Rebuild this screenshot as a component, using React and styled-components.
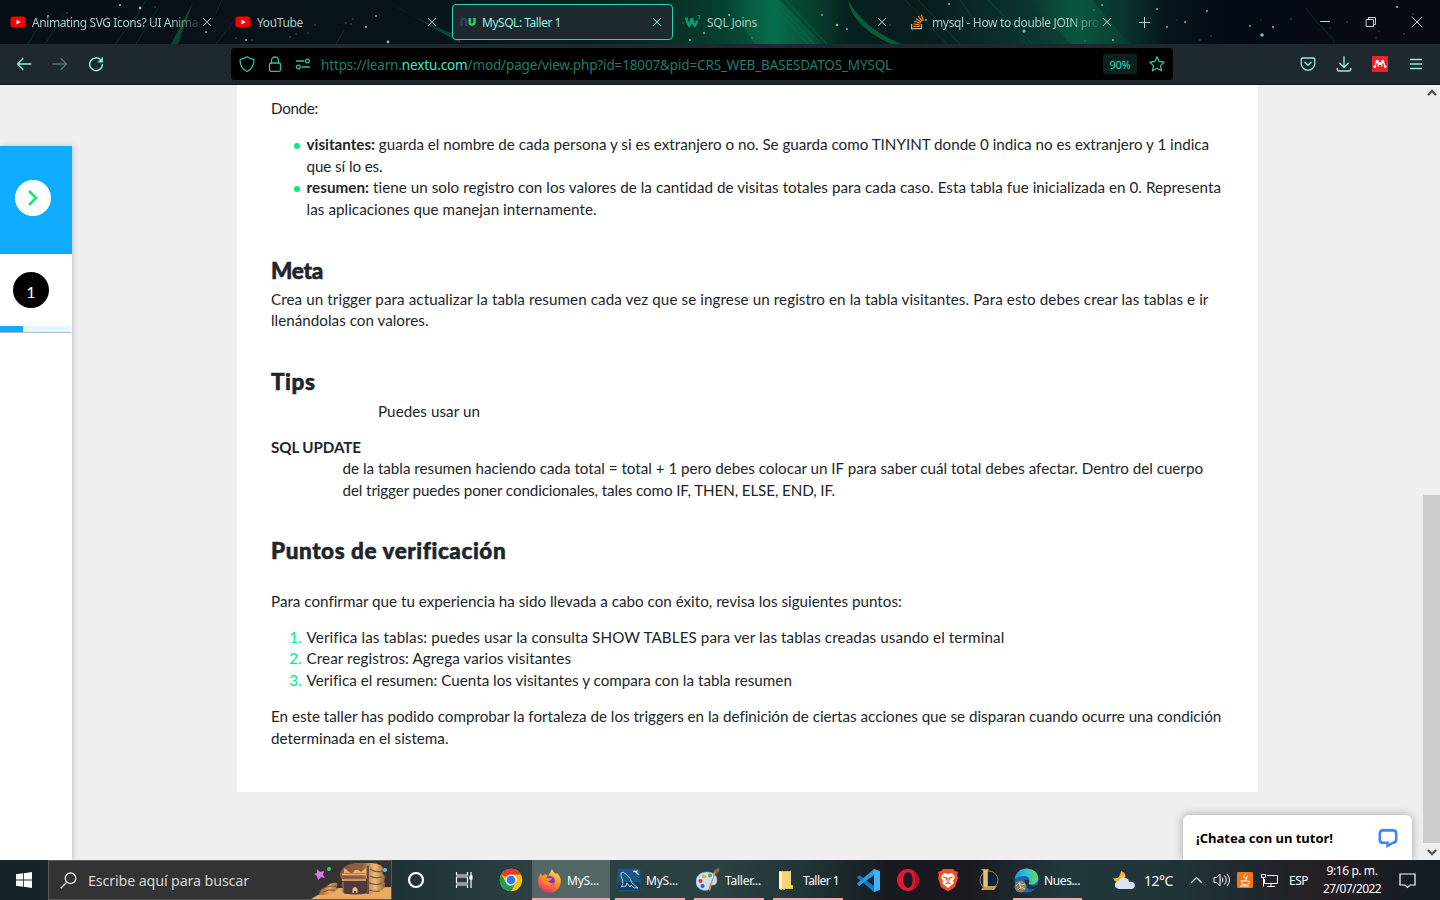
import React, { useLayoutEffect, useRef } from 'react';
import styled, { createGlobalStyle } from 'styled-components';

const Global = createGlobalStyle`
  * { box-sizing: border-box; }
  body { margin: 0; overflow: hidden; background: #efefef; }
  svg { display: block; flex: none; }
`;
const UI = '"Noto Sans", "Open Sans", sans-serif';

const Screen = styled.div`
  width: 1440px; height: 900px; display: flex; flex-direction: column; overflow: hidden;
  font-family: ${UI};
`;

/* A single text line whose tracking is adjusted so that it spans a given width. */
const LineText = styled.span`display: inline-block; white-space: nowrap;`;
function Fit({ w, children }) {
  const ref = useRef(null);
  useLayoutEffect(() => {
    const el = ref.current;
    el.style.letterSpacing = '0px';
    const natural = el.getBoundingClientRect().width;
    const n = el.textContent.length;
    el.style.letterSpacing = (w - natural) / n + 'px';
  }, [w]);
  return <LineText ref={ref}>{children}</LineText>;
}

/* ---------- Tab strip ---------- */
const TabStrip = styled.div`
  position: relative; height: 44px; flex: none; display: flex; align-items: center;
  background: #07131a; padding: 0 0 0 2px;
`;
const Backdrop = styled.svg`position: absolute; inset: 0;`;
const Tab = styled.div`
  position: relative; height: 36px; width: ${p => p.$w || 225}px; flex: none;
  display: flex; align-items: center; padding-left: 8px; gap: 6px;
  font-size: 12px; color: ${p => (p.$active ? '#8df0e0' : '#a9cbc6')};
  ${p => p.$active && 'background:#1d282f; border:1px solid #2bd0b8; border-radius:4px; width:221px; margin:0 4px 0 0; padding-left:7px;'}
`;
const TabLabel = styled.div`
  width: 168px; margin-right: -4px; padding-top: 1px; height: 20px; line-height: 20px; overflow: hidden; white-space: nowrap; flex: none;
  ${p => p.$fade && '-webkit-mask-image: linear-gradient(90deg,#000 138px,#0002 168px); mask-image: linear-gradient(90deg,#000 138px,#0002 168px);'}
`;
const WindowButtons = styled.div`
  position: relative; margin-left: auto; display: flex; align-items: center; width: 138px;
  svg { margin: 0 15px; }
`;
const PlusWrap = styled.div`position: relative; margin-left: 11px;`;

const Cross = ({ s = 10, c = '#a9cbc6' }) => (
  <svg width={s} height={s} viewBox="0 0 10 10" stroke={c} strokeWidth="1.05"><path d="M1 1l8 8M9 1l-8 8" /></svg>
);
const YouTube = () => (
  <svg width="16" height="16" viewBox="0 0 16 16"><rect x=".5" y="2.5" width="15" height="11" rx="3" fill="#f00" /><path d="M6.500 5.600v4.800L10.700 8z" fill="#fff" /></svg>
);
const NuLogo = () => (
  <svg width="16" height="16" viewBox="0 0 16 16" fill="none" strokeWidth="2.400">
    <path d="M1.400 12V7.200a2.400 2.400 0 0 1 4.800 0V12" stroke="#34405a" />
    <path d="M9.700 4v4.200a2.400 2.400 0 0 0 4.800 0V4" stroke="#16dc6b" />
  </svg>
);
const W3 = () => (
  <svg width="16" height="16" viewBox="0 0 16 16" fill="none" stroke="#0a9c6c">
    <path d="M1.200 3.500q.8 5 3 8Q6.500 8 6.800 4q.8 4.500 3 7.500 2-2 2.200-5" strokeWidth="2.700" /><path d="M12.700 1.500h2.300l-1 1.300q1.600.2.700 1.500-.8.800-1.900.1" strokeWidth="1" />
  </svg>
);
const Stack = () => (
  <svg width="16" height="16" viewBox="0 0 16 16" fill="none">
    <path d="M1.600 10v4.600h9.800V10" stroke="#b3bcbb" strokeWidth="1.300" />
    <path d="M3.200 12.400h6.600M3.500 9.800l6.400 1.200M4.400 7.100l6 2.400M6 4.400l5.200 3.900M8.300 2.100l3.900 5.100M11.500.6l1.500 6" stroke="#f48024" strokeWidth="1.250" />
  </svg>
);

const STARS = [[120,5,1],[140,8,1.4],[155,7,.8],[67,13,.7],[48,16,1],[107,17,.8],[119,17,.8],[153,22,.7],[206,32,1],[236,38,.7],[246,40,1],[252,40,.7],[275,20,1],[315,25,.7],[346,23,.8],[353,19,.7],[376,16,.9],[366,27,1],[351,24,.7],[290,37,.8],[296,34,.7],[308,33,.7],[388,42,1.4],[683,23,.8],[729,15,.9],[704,33,.9],[690,40,1],[752,38,.8],[822,15,.9],[837,25,1.2],[847,29,.9],[890,25,.8],[926,20,.9],[912,30,.7],[949,4,1],[1024,31,1.5],[1061,18,.8],[1102,5,.9],[1094,10,.7],[1113,40,1],[1085,41,.7],[1157,9,.9],[1185,22,.9],[1207,11,.9],[1167,27,.9],[1177,20,.6],[1200,40,.7],[1211,36,.7],[1250,26,.9],[1273,27,1],[1261,20,.6],[1262,35,1.8],[1291,19,.7],[1347,22,.8],[1330,28,.6],[1376,38,.6],[1397,7,1.1],[1404,34,.8],[1413,14,.7],[1379,31,.6]];

function Galaxy() {
  return (
    <Backdrop width="1440" height="44" viewBox="0 0 1440 44">
      <defs>
        <linearGradient id="sky" x1="0" x2="1">
          <stop offset="0" stopColor="#070f15" /><stop offset=".3" stopColor="#08141a" /><stop offset=".41" stopColor="#06201d" /><stop offset=".48" stopColor="#063529" />
          <stop offset=".53" stopColor="#065038" /><stop offset=".56" stopColor="#06462f" /><stop offset=".59" stopColor="#07201f" /><stop offset=".64" stopColor="#081c1c" /><stop offset=".69" stopColor="#0b2c29" />
          <stop offset=".745" stopColor="#0b4337" /><stop offset=".78" stopColor="#0a362f" /><stop offset=".81" stopColor="#06141a" /><stop offset=".85" stopColor="#050b15" /><stop offset="1" stopColor="#060a13" />
        </linearGradient>
        <linearGradient id="beam" x1="0" x2="1"><stop offset="0" stopColor="#067450" stopOpacity="0" /><stop offset=".5" stopColor="#067450" stopOpacity=".8" /><stop offset="1" stopColor="#066041" stopOpacity=".35" /></linearGradient>
      </defs>
      <rect width="1440" height="44" fill="url(#sky)" />
      <path d="M725 0h55l43 44h-68z" fill="url(#beam)" />
      <path d="M1030 0h62l38 44h-60z" fill="url(#beam)" opacity=".5" />
      <path d="M785 0l42 44M774 0l40 44M768 0l40 44" stroke="#08724d" strokeWidth="1.500" opacity=".45" />
      <path d="M848 0q15 28 53 44h-10Q852 26 848 0z" fill="#0a7d50" opacity=".65" />
      <path d="M385 0q32 20 66 33l9 4v6Q420 20 385 0z" fill="#0a6b4b" opacity=".6" />
      <path d="M193 2l-22 42h7z" fill="#08603d" opacity=".7" />
      <g stroke="#0b6b48" strokeWidth="1" opacity=".35">
        <path d="M40 24l-12 20M65 14L45 44M133 20l-18 24M158 8l-22 36M222 0l-6 13M236 18l-20 26M344 30l-8 14M146 0l-17 30M905 0l42 44M918 0l42 44M960 0l14 20M988 0l44 44M1305 8l30 34" />
      </g>
      {STARS.map(([x, y, r]) => <circle key={x + '-' + y} cx={x} cy={y} r={r} fill="#9bd6d1" opacity={r > .85 ? .85 : .45} />)}
    </Backdrop>
  );
}

/* ---------- Address bar ---------- */
const NavBar = styled.div`
  height: 41px; flex: none; background: #1d282f; display: flex; align-items: center;
  border-bottom: 1px solid #0a1a1c; position: relative;
`;
const NavButtons = styled.div`display: flex; gap: 20px; width: 231px; padding-left: 16px; flex: none;`;
const UrlBox = styled.div`
  width: 942px; height: 32px; background: #000; border-radius: 4px; display: flex; align-items: center; flex: none;
  padding: 0 8px; color: #1f7c6d; font-size: 13.5px;
`;
const UrlText = styled.div`padding-top: 1px;`;
const UrlIcons = styled.div`display: flex; gap: 12px; width: 82px;`;
const Host = styled.span`color: #45e3ca;`;
const Zoom = styled.div`
  margin-left: auto; margin-right: 12px; width: 34px; height: 20px; border-radius: 3px; background: #0a211e;
  color: #37d6bd; font-size: 11px; line-height: 21px; text-align: center; letter-spacing: -.2px;
`;
const NavRight = styled.div`display: flex; margin-left: auto; gap: 20px; padding-right: 16px;`;
const Ico = ({ children, c = '#93eadb', s = 16, w = 1.3, o = 1 }) => (
  <svg width={s} height={s} viewBox="0 0 16 16" fill="none" stroke={c} strokeWidth={w} strokeLinecap="round" strokeLinejoin="round" opacity={o}>{children}</svg>
);

/* ---------- Page ---------- */
const Page = styled.main`
  position: relative; height: 775px; flex: none; background: #efefef; display: flex; overflow: hidden;
`;
const Side = styled.aside`
  width: 72px; height: 714px; margin-top: 61px; background: #fff; box-shadow: 1px 0 5px #0003; flex: none;
`;
const SideTop = styled.div`height: 108px; background: #10adff; padding: 34px 0 0 15px;`;
const Round = styled.div`
  width: 36px; height: 36px; border-radius: 50%; display: flex; align-items: center; justify-content: center;
  background: ${p => p.$bg}; color: #fff; font: 16px/36px Lato, sans-serif; padding-top: ${p => p.$drop || 0}px;
`;
const Step = styled.div`height: 72px; padding: 18px 0 0 13px;`;
const Progress = styled.div`
  height: 7px; width: 71px; background: linear-gradient(90deg, #10adff 23px, #e4f6ff 23px); border-bottom: 1px solid #b4b8ba;
`;
const Article = styled.article`
  width: 1021px; height: 707px; margin-left: 165px; background: #fff; padding: 13px 34px 0;
  font: 15.2px/21.6px Lato, sans-serif; color: #212529; flex: none;
`;
const Para = styled.div`
  margin-top: ${p => p.$mt ?? 14.4}px; padding-left: ${p => p.$indent || 0}px;
  font-weight: ${p => (p.$bold ? 700 : 400)};
`;
const Row = styled.div`height: 21.6px; white-space: nowrap; position: relative;`;
const Heading = styled.h2`
  margin: ${p => p.$mt}px 0 0; font: 900 22.5px/26px Lato, sans-serif; height: 26px; white-space: nowrap;
  -webkit-text-stroke: .55px #212529;
`;
const List = styled.div`margin-top: 14.4px;`;
const Item = styled.div`display: grid; grid-template-columns: 35.6px 1fr;`;
const Dot = styled.i`width: 6px; height: 6px; border-radius: 50%; background: #00ee76; margin: 9px 0 0 23px;`;
const Num = styled.span`color: #00ee80; text-align: right; padding-right: 5px;`;
const Scroll = styled.div`
  margin-left: auto; width: 17px; background: #f0f0f0; display: flex; flex-direction: column; align-items: center;
  justify-content: space-between; padding: 4px 0;
`;
const Thumb = styled.div`width: 17px; height: 348px; background: #cdcdcd; margin-top: auto; margin-bottom: 5px;`;
const Chat = styled.div`
  position: absolute; left: 1183px; bottom: 0; width: 229px; height: 45px; background: #fff; border-radius: 6px 6px 0 0;
  box-shadow: 0 0 10px #0005; display: flex; align-items: center; justify-content: space-between;
  padding: 0 14px 0 13px; font: 700 13px/20px ${UI}; color: #000;
`;

/* ---------- Taskbar ---------- */
const Taskbar = styled.footer`
  height: 40px; flex: none; display: flex; color: #fff; font-size: 12px;
  background: linear-gradient(90deg, #142326 0, #1e3235 390px, #2b4142 540px, #2a4141 720px, #203435 810px, #18191f 890px, #19191f 970px, #20383b 1060px, #203437 1180px, #20252b 1270px, #261d23 1330px, #151d23 1410px);
`;
const Start = styled.div`width: 48px; display: grid; place-items: center;`;
const Search = styled.div`
  width: 344px; background: #333; border: 1px solid #5a5a5a; display: flex; align-items: center; padding-left: 11px;
  font-size: 14.3px; color: #d6d6d6; gap: 11px; overflow: hidden;
  > svg:last-child { margin-left: auto; }
`;
const AppButton = styled.div`
  width: ${p => p.$w}px; margin-right: ${p => p.$gap || 0}px; height: 40px; display: flex; align-items: center;
  justify-content: ${p => (p.$open ? 'flex-start' : 'center')}; gap: 5px; padding-left: ${p => (p.$open ? p.$pad ?? 2 : p.$pad || 0)}px; flex: none;
  background: ${p => (p.$active ? '#526766' : 'transparent')};
  box-shadow: ${p => (p.$open ? 'inset 0 -2px #f5a9ad' : 'none')};
`;
const Tray = styled.div`display: flex; align-items: center; flex: 1; padding-left: 31px;`;
const Slot = styled.div`width: ${p => p.$w}px; flex: none; display: flex; font-size: ${p => p.$fs || 12}px; white-space: nowrap;`;
const Clock = styled.div`
  width: 62px; margin-right: 16px; display: flex; flex-direction: column; align-items: center; font-size: 12px; line-height: 18px; flex: none;
`;

const Treasure = () => (
  <svg width="80" height="38" viewBox="0 0 80 38">
    <defs>
      <linearGradient id="gold" x1="0" x2="1"><stop offset="0" stopColor="#9c6339" /><stop offset=".6" stopColor="#e5aa60" /><stop offset="1" stopColor="#a76b3b" /></linearGradient>
      <linearGradient id="lid" x1="0" x2="1"><stop offset="0" stopColor="#8a5a3c" /><stop offset=".5" stopColor="#8f6041" /><stop offset=".78" stopColor="#f0bb78" /><stop offset="1" stopColor="#94603a" /></linearGradient>
    </defs>
    <path d="M0 38Q14 29 28 27L48 27 80 26V38z" fill="#e7ad61" />
    <path d="M8 34q0-6 7-8 5-5 11-4 1 3-1 4 3 2-2 5l-6 3z" fill="url(#gold)" />
    <path d="M11 28q6-4 14-3M12 31q6-3 12-2" stroke="#7d4e30" fill="none" />
    <path d="M30 10Q34 3 44 2h17q11 1 12 7l-2 3q5 4 2 8 3 5-2 9l-12 4H34q-4-2-2-6-3-3 0-7-5-5-2-10z" fill="url(#lid)" />
    <path d="M59 8q6 4 13 2M59 15q6 3 12 1M58 22q8 3 13 0M58 29q6 2 11 1" stroke="#835333" fill="none" strokeWidth="1.200" />
    <path d="M33 18h23v14q-12 3-23 0z" fill="#50383b" /><path d="M33 7v5h22V7l-5 4q-3-3-6-2-3 5-6 2z" fill="#f0b269" />
    <path d="M31 13.500h24M31 19h24" stroke="#f2b66f" strokeWidth="1.400" /><path d="M57 5v28" stroke="#593c36" strokeWidth="1.600" />
    <path d="M41.500 32v-4q2.500-4 5 0v4h-1.500v-2h-2v2z" fill="#f2c179" />
    <path d="M6 8l3 3 4-1-1 4 2 3-4-1-3 3-1-4-3-2 3-1z" fill="#dd76ef" />
    <circle cx="18" cy="8" r="2" fill="#3ecb6f" /><circle cx="74" cy="9" r="2" fill="#57cfe0" />
  </svg>
);
const Chrome = () => (
  <svg width="24" height="24" viewBox="0 0 24 24">
    <circle cx="12" cy="12" r="11.200" fill="#fbc116" />
    <path d="M2.300 6.400A11.200 11.200 0 0 1 21.700 6.400H12L7.200 9.200z" fill="#e33b2e" />
    <path d="M2.300 6.400L7.200 14.800 12 17.600 16.800 14.800 12 23.200A11.200 11.200 0 0 1 2.300 6.400z" fill="#229b4b" />
    <circle cx="12" cy="12" r="5.600" fill="#fff" /><circle cx="12" cy="12" r="4.400" fill="#3478e6" />
  </svg>
);
const Firefox = () => (
  <svg width="25" height="25" viewBox="0 0 25 25">
    <defs><linearGradient id="ff" x1=".8" y1="0" x2=".3" y2="1"><stop offset="0" stopColor="#ffe844" /><stop offset=".45" stopColor="#ff9328" /><stop offset="1" stopColor="#f52b68" /></linearGradient></defs>
    <path d="M15 1q1 3 4 5l1-1q5 5 3.500 11A11.300 11.300 0 0 1 1.300 15Q.6 9 4 5l1 3 3-2 3 2Q13 5 15 1z" fill="url(#ff)" />
    <circle cx="12.500" cy="13" r="5.300" fill="#6a3be0" /><path d="M5 9q5-1 6 1h4q-1 3-4 3 2 3 6 2-3 5-8 2-4-2-4-8z" fill="#ff8a22" /><path d="M13 8q4 0 5 5-2-3-5-5z" fill="#ba35cf" />
  </svg>
);
const Workbench = () => (
  <svg width="24" height="24" viewBox="0 0 24 24" fill="none"><rect x=".5" y=".5" width="23" height="23" rx="3" fill="#1b5584" /><path d="M1 14h22v8H1z" fill="#123f69" />
    <path d="M4.500 19q2-3 1-7-2-4-1.500-7 2-2 5 1 5 4 6 9l6 5q-3-.5-4 0l-3-3-1 2-3-4-1 3q-3 0-4.500 1z" stroke="#c8dbe8" strokeWidth=".9" /><path d="M16 3.500q2-1 3 .500l3 3M19 4l1.500-1.500" stroke="#e7eef4" strokeWidth="1.400" /></svg>
);
const Paint = () => (
  <svg width="24" height="24" viewBox="0 0 24 24"><path d="M11 4q9 0 10 8 0 5-4 5t-3 4q-5 3-10 0-5-3-4-9 2-8 11-8z" fill="#c4e2f1" stroke="#7fabc6" strokeWidth=".6" />
    <circle cx="4.500" cy="13" r="2" fill="#df3434" /><circle cx="8" cy="8.500" r="2" fill="#efa42c" /><circle cx="14" cy="7.500" r="2" fill="#51ae45" /><circle cx="6.500" cy="18" r="2" fill="#315ec1" />
    <path d="M20 4l-3 8-3 11q-2-1-1-4l4-10 1-6z" fill="#e18b32" /><path d="M18 4q0-3 5-4 2 3-3 6z" fill="#986348" /></svg>
);
const Folder = () => (
  <svg width="24" height="24" viewBox="0 0 24 24"><path d="M5 3h12v14h2v4H7z" fill="#dca83b" /><path d="M5 3l6 2v17l-6-2z" fill="#fff0a8" /><path d="M8 3.500h9v14h1.500v3H8z" fill="#f3d377" /><path d="M5 3l3 1v18l-3-1z" fill="#fff1b3" /></svg>
);
const VSCode = () => (
  <svg width="25" height="25" viewBox="0 0 25 25"><path d="M18 1l6 2.500v18L18 24 1 9.500 3 7l15 11z" fill="#137ac8" /><path d="M18 24L24 21.500v-18L18 1 1 15.500 3 18 18 7z" fill="#249ee8" /><path d="M18 1l6 2.500v18L18 24z" fill="#43b2f3" /></svg>
);
const Opera = () => (
  <svg width="24" height="24" viewBox="0 0 24 24"><circle cx="12" cy="12" r="11" fill="#e51932" /><path d="M15 1.500a11 11 0 0 1 0 21q4-4 4-10.500t-4-10.500z" fill="#ad1028" /><ellipse cx="12" cy="12" rx="4.700" ry="8" fill="#1b1a20" /></svg>
);
const Brave = () => (
  <svg width="24" height="24" viewBox="0 0 24 24"><path d="M7 1h10l2 2 3 1-1 3 1 3-3 9-7 4.500L5 19 2 10l1-3-1-3 3-1z" fill="#f74b21" /><path d="M8 5l4 1 4-1 3 4-2 4 1 2-6 5-6-5 1-2-2-4z" fill="#fff" /><path d="M7 9l3.500 1-.5 2.500M17 9l-3.500 1 .5 2.500M9.500 16l2.500-1.500 2.500 1.500M12 10v4" stroke="#f74b21" fill="none" strokeWidth="1.100" /></svg>
);
const League = () => (
  <svg width="24" height="24" viewBox="0 0 24 24"><circle cx="13" cy="12" r="9" fill="#0c2533" stroke="#a57d3b" /><path d="M5 1h8l-1 2v15h9l-3 4H5l2-3V3z" fill="#c69a50" /><path d="M8 2h3v17H8z" fill="#e7c37b" /></svg>
);
const Edge = () => (
  <svg width="25" height="25" viewBox="0 0 25 25">
    <defs><linearGradient id="edgeTop" x1="0" x2="1"><stop offset="0" stopColor="#1a9fe0" /><stop offset=".5" stopColor="#35c2c9" /><stop offset="1" stopColor="#62d85c" /></linearGradient></defs>
    <circle cx="12.500" cy="12.500" r="12" fill="#1267b4" />
    <path d="M.6 11Q3 .5 13 .5q11 1 11.500 10.500-1.500 6-9 5.500-1.500-.5 0-2.500 1-5-5-6Q5 7.500.6 11z" fill="url(#edgeTop)" />
    <path d="M11 11.500q-3 7 4 9.500 4 1.500 8-2 .5-1.500-1-2-3 2-7-.500-1-.500 0-2.500.500-3-4-2.500z" fill="#203437" />
    <circle cx="6.500" cy="18.500" r="6" fill="#8c7d61" /><path d="M2 18l3-3 3 2 3-1M4 22l3-3 4 2M5 14l2 7" stroke="#e0cfaa" fill="none" />
  </svg>
);

const Tabs = () => (
  <TabStrip>
    <Galaxy />
    <Tab><YouTube /><TabLabel $fade><Fit w={166}>Animating SVG Icons? UI Anima</Fit></TabLabel><Cross /></Tab>
    <Tab><YouTube /><TabLabel><Fit w={46}>YouTube</Fit></TabLabel><Cross /></Tab>
    <Tab $active><NuLogo /><TabLabel><Fit w={79}>MySQL: Taller 1</Fit></TabLabel><Cross c="#8df0e0" /></Tab>
    <Tab $w={225}><W3 /><TabLabel><Fit w={50}>SQL Joins</Fit></TabLabel><Cross /></Tab>
    <Tab $w={224}><Stack /><TabLabel $fade><Fit w={167}>mysql - How to double JOIN pro</Fit></TabLabel><Cross /></Tab>
    <PlusWrap><svg width="14" height="14" viewBox="0 0 14 14" stroke="#b9d5d0"><path d="M7.500 2v11M2 7.500h11" /></svg></PlusWrap>
    <WindowButtons>
      <Ico w={1} c="#b9d5d0"><path d="M3.500 7.500h9" /></Ico>
      <Ico w={1} c="#b9d5d0"><path d="M3.500 5.500h7v7h-7zM5.500 5V3.500h7v7H11" /></Ico>
      <Ico w={1} c="#b9d5d0"><path d="M3 3l10 10M13 3L3 13" /></Ico>
    </WindowButtons>
  </TabStrip>
);

const Navigation = () => (
  <NavBar>
    <NavButtons>
      <Ico><path d="M15 8H1.500M7 2.500L1.500 8 7 13.500" /></Ico>
      <Ico o={.4}><path d="M1 8h13.500M9 2.500L14.500 8 9 13.500" /></Ico>
      <Ico w={1.5}><path d="M14.500 8.500A6.400 6.400 0 1 1 12.700 3.800L14 5.500" /><path d="M14.700 1.500v4.700H10z" fill="#93eadb" strokeWidth=".5" /></Ico>
    </NavButtons>
    <UrlBox>
      <UrlIcons>
        <Ico c="#2fbfa8"><path d="M8 .8q3 2 6.800 2.500Q15.500 11.500 8 15.500.5 11.500 1.200 3.300 5 2.800 8 .8z" /></Ico>
        <Ico c="#2fbfa8"><rect x="2.500" y="7" width="11" height="8.300" rx="1.500" /><path d="M4.500 7V4.500a3.500 3.500 0 0 1 7 0V7" /></Ico>
        <Ico c="#2fbfa8"><path d="M1.500 5h7.500M7 11h7.500" /><circle cx="12.500" cy="5" r="1.900" /><circle cx="3.300" cy="11" r="1.900" /></Ico>
      </UrlIcons>
      <UrlText><Fit w={571}>https://learn.<Host>nextu.com</Host>/mod/page/view.php?id=18007&amp;pid=CRS_WEB_BASESDATOS_MYSQL</Fit></UrlText>
      <Zoom>90%</Zoom>
      <Ico c="#2fbfa8"><path d="M8 .8l2.200 4.700 5 .6-3.700 3.500 1 5.200L8 12.200l-4.500 2.600 1-5.200L.8 6.100l5-.6z" /></Ico>
    </UrlBox>
    <NavRight>
      <Ico><path d="M2.500 2h11q1.300 0 1.300 1.300V7.500a6.800 6.800 0 0 1-13.600 0V3.300Q1.200 2 2.500 2z" /><path d="M4.800 6.300L8 9.300l3.200-3" /></Ico>
      <Ico w={1.4}><path d="M8 .8v10.500M3.800 7.300L8 11.400l4.200-4.100M1.200 12.500q0 2.500 2 2.500h9.600q2 0 2-2.500" /></Ico>
      <svg width="16" height="16" viewBox="0 0 16 16"><rect width="16" height="16" fill="#e9222c" /><g fill="#fff"><circle cx="5.300" cy="5.300" r="1.600" /><circle cx="10.700" cy="5.300" r="1.600" /><circle cx="8" cy="7.600" r="1.500" /><circle cx="2.800" cy="10.600" r="1.300" /><circle cx="13.200" cy="10.600" r="1.300" /></g><path d="M5 5.500q-1.800 2-1.600 5M11 5.500q1.800 2 1.600 5M5.300 5.500q1.400 2 .9 5M10.700 5.500q-1.400 2-.9 5" stroke="#fff" fill="none" strokeWidth="1.200" /></svg>
      <Ico><path d="M2.500 3.500h11M2.500 8h11M2.500 12.500h11" /></Ico>
    </NavRight>
  </NavBar>
);

const Lesson = () => (
  <Article>
    <Para $mt={0}><Row><Fit w={47}>Donde:</Fit></Row></Para>
    <List>
      <Item><Dot /><div><Row><Fit w={902.5}><b>visitantes:</b> guarda el nombre de cada persona y si es extranjero o no. Se guarda como TINYINT donde 0 indica no es extranjero y 1 indica</Fit></Row><Row><Fit w={76}>que sí lo es.</Fit></Row></div></Item>
      <Item><Dot /><div><Row><Fit w={915}><b>resumen:</b> tiene un solo registro con los valores de la cantidad de visitas totales para cada caso. Esta tabla fue inicializada en 0. Representa</Fit></Row><Row><Fit w={290}>las aplicaciones que manejan internamente.</Fit></Row></div></Item>
    </List>
    <Heading $mt={37.5}><Fit w={52}>Meta</Fit></Heading>
    <Para $mt={5}><Row><Fit w={937.5}>Crea un trigger para actualizar la tabla resumen cada vez que se ingrese un registro en la tabla visitantes. Para esto debes crear las tablas e ir</Fit></Row><Row><Fit w={157.5}>llenándolas con valores.</Fit></Row></Para>
    <Heading $mt={37}><Fit w={44.5}>Tips</Fit></Heading>
    <Para $mt={5.6} $indent={107}><Row><Fit w={102}>Puedes usar un</Fit></Row></Para>
    <Para $bold><Row><Fit w={90}>SQL UPDATE</Fit></Row></Para>
    <Para $mt={0} $indent={71.5}><Row><Fit w={860.5}>de la tabla resumen haciendo cada total = total + 1 pero debes colocar un IF para saber cuál total debes afectar. Dentro del cuerpo</Fit></Row><Row><Fit w={492.5}>del trigger puedes poner condicionales, tales como IF, THEN, ELSE, END, IF.</Fit></Row></Para>
    <Heading $mt={36.5}><Fit w={235}>Puntos de verificación</Fit></Heading>
    <Para $mt={27}><Row><Fit w={630.5}>Para confirmar que tu experiencia ha sido llevada a cabo con éxito, revisa los siguientes puntos:</Fit></Row></Para>
    <List>
      <Item><Num>1.</Num><Row><Fit w={697.5}>Verifica las tablas: puedes usar la consulta SHOW TABLES para ver las tablas creadas usando el terminal</Fit></Row></Item>
      <Item><Num>2.</Num><Row><Fit w={264.5}>Crear registros: Agrega varios visitantes</Fit></Row></Item>
      <Item><Num>3.</Num><Row><Fit w={485}>Verifica el resumen: Cuenta los visitantes y compara con la tabla resumen</Fit></Row></Item>
    </List>
    <Para><Row><Fit w={950}>En este taller has podido comprobar la fortaleza de los triggers en la definición de ciertas acciones que se disparan cuando ocurre una condición</Fit></Row><Row><Fit w={177.5}>determinada en el sistema.</Fit></Row></Para>
  </Article>
);

const Arrow = ({ up }) => (
  <svg width="10" height="8" viewBox="0 0 10 8" fill="none" stroke="#555" strokeWidth="2.300"><path d={up ? 'M1 6l4-4 4 4' : 'M1 2l4 4 4-4'} /></svg>
);

export default function App() {
  return (
    <Screen>
      <Global />
      <Tabs />
      <Navigation />
      <Page>
        <Side>
          <SideTop><Round $bg="#fff"><svg width="10" height="18" viewBox="0 0 10 18" fill="none" stroke="#1be573" strokeWidth="2.600"><path d="M1 2l7 7-7 7" /></svg></Round></SideTop>
          <Step><Round $bg="#000" $drop={3}>1</Round></Step>
          <Progress />
        </Side>
        <Lesson />
        <Scroll><Arrow up /><Thumb /><Arrow /></Scroll>
        <Chat>
          <Fit w={137}>¡Chatea con un tutor!</Fit>
          <svg width="20" height="20" viewBox="0 0 20 20" fill="none" stroke="#4384f5" strokeWidth="2.600"><path d="M5 2.400h10q3 0 3.200 3v6.300q-.2 3-3.200 3L9.500 17.800v-3H5q-3 0-3.200-3V5.400q.2-3 3.200-3z" /></svg>
        </Chat>
      </Page>
      <Taskbar>
        <Start><svg width="16" height="16" viewBox="0 0 16 16" fill="#fff"><path d="M0 2.300l7-1v6.300H0zM7.800 1.200L16 0v7.600H7.800zM0 8.400h7v6.300l-7-1zM7.800 8.400H16V16l-8.200-1.200z" /></svg></Start>
        <Search>
          <svg width="17" height="17" viewBox="0 0 17 17" fill="none" stroke="#e5e5e5" strokeWidth="1.300"><circle cx="10.500" cy="6.300" r="5.300" /><path d="M6.700 10.200L.8 16.200" /></svg>
          <Fit w={161}>Escribe aquí para buscar</Fit><Treasure />
        </Search>
        <AppButton $w={48}><svg width="18" height="18" viewBox="0 0 18 18"><circle cx="9" cy="9" r="7" fill="none" stroke="#fff" strokeWidth="2.200" /></svg></AppButton>
        <AppButton $w={46} $pad={2}><svg width="18" height="18" viewBox="0 0 18 18" fill="none" stroke="#fff" strokeWidth="1.200"><path d="M1.500 1v3h11V1M1.500 17v-3h11v3M1.500 6h11v6h-11zM16 1v16" /><path d="M15 5h2v3h-2z" fill="#fff" /></svg></AppButton>
        <AppButton $w={46} $pad={4}><Chrome /></AppButton>
        <AppButton $w={78} $gap={5} $open $active $pad={5}><Firefox /><Fit w={32}>MyS...</Fit></AppButton>
        <AppButton $w={70} $gap={9} $open><Workbench /><Fit w={32}>MyS...</Fit></AppButton>
        <AppButton $w={70} $gap={9} $open><Paint /><Fit w={36}>Taller...</Fit></AppButton>
        <AppButton $w={70} $gap={2} $open $pad={1}><Folder /><Fit w={36}>Taller 1</Fit></AppButton>
        <AppButton $w={46}><VSCode /></AppButton>
        <AppButton $w={34}><Opera /></AppButton>
        <AppButton $w={46}><Brave /></AppButton>
        <AppButton $w={34} $gap={8}><League /></AppButton>
        <AppButton $w={69} $open $pad={1}><Edge /><Fit w={36}>Nues...</Fit></AppButton>
        <Tray>
          <Slot $w={31}><svg width="22" height="20" viewBox="0 0 22 20"><path d="M8 1q6 2 4 8-2 4-8 3-3-1-4-4 7 2 8-7z" fill="#f9ba25" /><path d="M6 19q-5-1-4-5 1-3 4-3 2-5 7-3 3 1 3 4 5-1 6 3 0 4-4 4z" fill="#d8e3f5" /></svg></Slot>
          <Slot $w={46} $fs={14}><Fit w={29}>12°C</Fit></Slot>
          <Slot $w={23}><svg width="13" height="8" viewBox="0 0 13 8" fill="none" stroke="#fff" strokeWidth="1.200"><path d="M1 7l5.500-5.500L12 7" /></svg></Slot>
          <Slot $w={24}><svg width="18" height="16" viewBox="0 0 18 16" fill="none" stroke="#fff"><path d="M1 5.500h2.500L7 2v12l-3.500-3.500H1zM9 5.500q2 2.500 0 5M11.500 3.500q3.500 4.500 0 9M14 2q5 6 0 12" /></svg></Slot>
          <Slot $w={24}><svg width="16" height="16" viewBox="0 0 16 16" fill="none" stroke="#fff"><rect width="16" height="16" rx="1" fill="#ed761b" stroke="none" /><path d="M9 1.500q-4 3-1 4.500t0 2.500M11 4q-3 1-1 3M3.500 9h7q3 0 2 2l-2 1M4.500 9.500q0 3 2 3h3M3 14h9" /></svg></Slot>
          <Slot $w={28}><svg width="17" height="15" viewBox="0 0 17 15" fill="none" stroke="#fff"><path d="M6 2.500h10.500v8H3.500V6M10 10.500v3M6 13.500h8M.5 1.500h4v3h-4zM2.500 4.500v9" /></svg></Slot>
          <Slot $w={32}><Fit w={19}>ESP</Fit></Slot>
          <Clock><Fit w={51}>9:16 p. m.</Fit><Fit w={58}>27/07/2022</Fit></Clock>
          <svg width="17" height="17" viewBox="0 0 17 17" fill="none" stroke="#fff" strokeWidth="1.200"><path d="M1 2h15v11h-5l-2.500 2.500L6 13H1z" /></svg>
        </Tray>
      </Taskbar>
    </Screen>
  );
}
